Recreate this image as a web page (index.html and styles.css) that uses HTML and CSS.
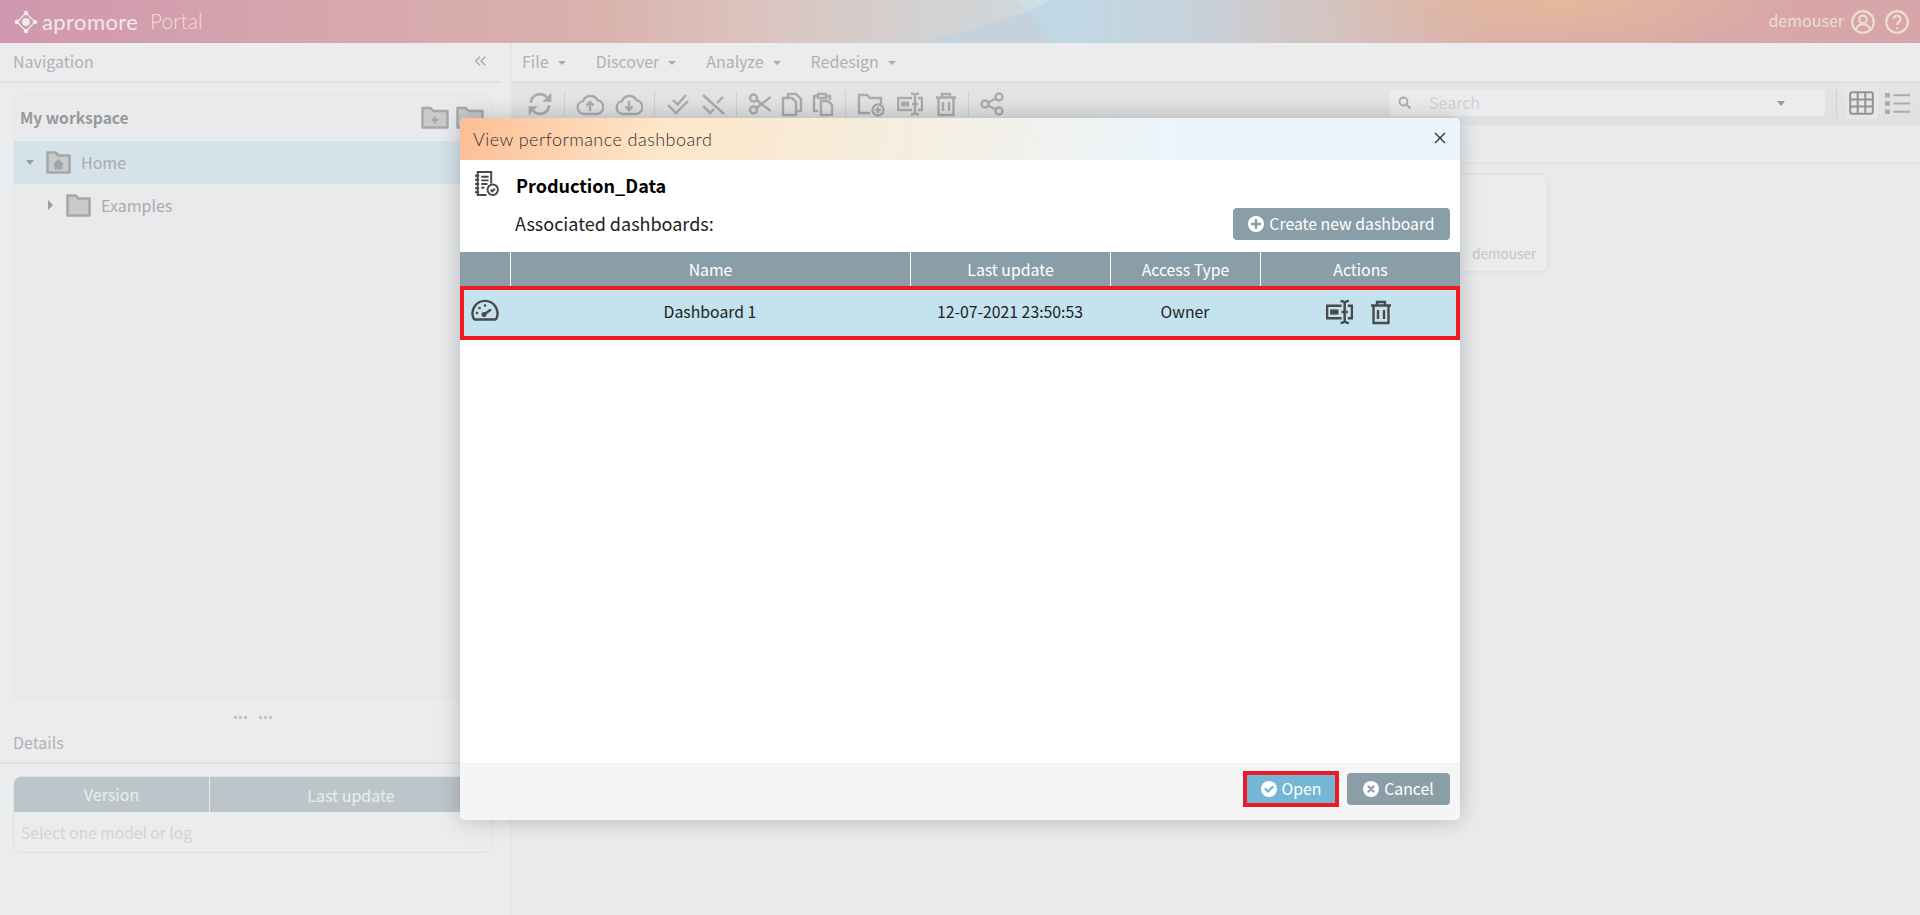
FILE: index.html
```html
<!DOCTYPE html>
<html lang="en">
<head>
<meta charset="utf-8">
<title>Apromore Portal</title>
<link rel="stylesheet" href="styles.css">
</head>
<body>
<svg class="defs" width="0" height="0" aria-hidden="true">
  <symbol id="i-sync" viewBox="0 0 24 24"><path d="M3.500 11a8.500 8.500 0 0 1 14.700-5.300L21 8.500"/><path class="solid" d="M22.500 1.500V10h-8.500z"/><path d="M20.500 13a8.500 8.500 0 0 1-14.700 5.300L3 15.500"/><path class="solid" d="M1.500 22.500V14H10z"/></symbol>
  <symbol id="i-up" viewBox="0 0 28 24"><path d="M8 22a6.500 6.500 0 0 1-1-12.900 8 8 0 0 1 14.500-1A7 7 0 0 1 20 22z"/><path d="M14 19v-9M10.500 13.500l3.500-3.500 3.500 3.500"/></symbol>
  <symbol id="i-down" viewBox="0 0 28 24"><path d="M8 22a6.500 6.500 0 0 1-1-12.900 8 8 0 0 1 14.500-1A7 7 0 0 1 20 22z"/><path d="M14 9v9M10.500 14.500l3.500 3.500 3.500-3.500"/></symbol>
  <symbol id="i-checks" viewBox="0 0 24 24"><path d="M7 8l4.500 4.500L20 3"/><path d="M2 13l8 8L22 9"/></symbol>
  <symbol id="i-unchecks" viewBox="0 0 24 24"><path d="M2 3l21 19"/><path d="M2 14l7 7 4-4"/><path d="M16 11l6-6"/></symbol>
  <symbol id="i-cut" viewBox="0 0 24 24"><circle cx="5.500" cy="6" r="3.500"/><circle cx="5.500" cy="18" r="3.500"/><path d="M8.500 8l14 11M8.500 16l14-11"/></symbol>
  <symbol id="i-copy" viewBox="0 0 22 24"><path d="M7 6V2h8l5 5v12h-5"/><path d="M2 6h9l4 4v13H2z"/></symbol>
  <symbol id="i-paste" viewBox="0 0 22 24"><path d="M6 19H2V4h4M14 4h4v4"/><path d="M6 6V2h8v4z"/><path d="M9 9h7l4 4v10H9z"/></symbol>
  <symbol id="i-folder-add" viewBox="0 0 28 24"><path d="M13 21H2V3h8l3 3h11v6"/><circle cx="21" cy="18" r="5.500"/><path d="M21 15v6M18 18h6"/></symbol>
  <symbol id="i-rename" viewBox="0 0 26 24"><path d="M15 6H1v12h14M21 6h4v12h-4"/><path d="M18 3v18M14 1.500c2 0 3 .5 4 1.500 1-1 2-1.500 4-1.500M14 22.500c2 0 3-.5 4-1.500 1 1 2 1.500 4 1.500"/><path class="solid" d="M4 9.500h8v5H4z"/><path d="M15 12h6"/></symbol>
  <symbol id="i-trash" viewBox="0 0 22 24"><path d="M1 5.500h20M7 5V2h8v3"/><path d="M3.500 6v17h15V6"/><path d="M8 10v9M14 10v9"/></symbol>
  <symbol id="i-share" viewBox="0 0 24 24"><circle cx="19" cy="5" r="3.500"/><circle cx="5" cy="12" r="3.500"/><circle cx="19" cy="19" r="3.500"/><path d="M8 10.500l8-4M8 13.500l8 4"/></symbol>
  <symbol id="i-folder" viewBox="0 0 25 23"><path class="tint" d="M1.500 21.500V1.500h8l3 3h11v17z"/></symbol>
  <symbol id="i-gauge" viewBox="0 0 28 22"><path d="M4 20.500a2 2 0 0 1-1.500-1.200A12.500 12.500 0 1 1 25.500 19.300 2 2 0 0 1 24 20.500z"/><path d="M13 15.500l7-5"/><circle class="solid" cx="13" cy="15.500" r="2.500"/><circle class="solid" cx="6" cy="14" r="1.300"/><circle class="solid" cx="8.500" cy="9" r="1.300"/><circle class="solid" cx="14" cy="6.500" r="1.300"/></symbol>
</svg>

<header class="topbar">
  <svg class="top-art" viewBox="0 0 1920 43" aria-hidden="true">
    <defs><linearGradient id="wash" gradientUnits="userSpaceOnUse" x1="1030" y1="0" x2="1260" y2="0"><stop offset="0" stop-color="#bfd8e6"/><stop offset="1" stop-color="#bfd8e6" stop-opacity="0"/></linearGradient></defs>
    <path d="M1016 0L1053 43H1300V0z" fill="url(#wash)"/>
    <path d="M1016 0h36Q1040 6 1026 11z" fill="#cddee4"/>
    <path d="M924 43Q985 25 1027 12L1053 43z" fill="#c5d1db"/>
  </svg>
  <div class="brand">
    <svg class="logo" viewBox="0 0 24 24" aria-hidden="true"><path d="M12 3l9 9-9 9-9-9z" fill="none" stroke="currentColor" stroke-width="1.200" stroke-linejoin="round"/><circle cx="12" cy="12" r="3.900" fill="currentColor"/><circle cx="12" cy="3" r="2.300" fill="currentColor"/><circle cx="12" cy="21" r="2.300" fill="currentColor"/><circle cx="3" cy="12" r="2.300" fill="currentColor"/><circle cx="21" cy="12" r="2.300" fill="currentColor"/></svg>
    <span class="brand-name">apromore</span>
    <span class="brand-app">Portal</span>
  </div>
  <div class="user">
    <span class="user-name">demouser</span>
    <svg class="user-icon" viewBox="0 0 24 24" aria-hidden="true"><circle cx="12" cy="12" r="10.800"/><circle cx="12" cy="9.500" r="3.800"/><path d="M5.500 19c.5-3 2.500-4.500 6.500-4.500s6 1.500 6.500 4.500"/></svg>
    <svg class="user-icon" viewBox="0 0 24 24" aria-hidden="true"><circle cx="12" cy="12" r="10.800"/><path d="M8.500 9a3.500 3.500 0 1 1 5.500 3c-1.300.9-2 1.500-2 3"/><path d="M12 17.500v1.500"/></svg>
  </div>
</header>

<div class="app">
  <aside class="sidebar">
    <div class="side-title nav-title">
      <span>Navigation</span>
      <svg class="collapse" viewBox="0 0 12 10" aria-hidden="true"><path d="M5.500 1L1.500 5l4 4M10.500 1l-4 4 4 4"/></svg>
    </div>
    <section class="workspace">
      <div class="workspace-head">
        <span>My workspace</span>
        <div class="workspace-tools">
          <svg class="ws-icon" viewBox="0 0 28 23" aria-hidden="true"><path class="ws-fill" d="M1.500 21.500V2h8l3 3h14v16.500z"/><path d="M14 10.500v7M10.500 14h7"/></svg>
          <svg class="ws-icon" viewBox="0 0 28 23" aria-hidden="true"><path class="ws-fill" d="M1.500 21.500V2h8l3 3h14v16.500z"/></svg>
        </div>
      </div>
      <div class="tree-row selected">
        <i class="caret down"></i>
        <svg class="folder" viewBox="0 0 25 23" aria-hidden="true"><use href="#i-folder"/><path class="home" d="M12.500 8l-6 5.500h2v5h8v-5h2z"/></svg>
        <span>Home</span>
      </div>
      <div class="tree-row child">
        <i class="caret right"></i>
        <svg class="folder" viewBox="0 0 25 23" aria-hidden="true"><use href="#i-folder"/></svg>
        <span>Examples</span>
      </div>
    </section>
    <div class="splitter"><i></i><i></i></div>
    <div class="side-title details-title"><span>Details</span></div>
    <section class="details">
      <div class="details-head"><span class="d-version">Version</span><span class="d-update">Last update</span></div>
      <div class="details-empty">Select one model or log</div>
    </section>
  </aside>

  <main class="content">
    <nav class="menu">
      <span class="menu-item">File<i class="caret down"></i></span>
      <span class="menu-item">Discover<i class="caret down"></i></span>
      <span class="menu-item">Analyze<i class="caret down"></i></span>
      <span class="menu-item">Redesign<i class="caret down"></i></span>
    </nav>
    <div class="toolbar">
      <svg class="tb w26" aria-hidden="true"><use href="#i-sync"/></svg>
      <i class="sep"></i>
      <div class="group g11">
        <svg class="tb w28" aria-hidden="true"><use href="#i-up"/></svg>
        <svg class="tb w28" aria-hidden="true"><use href="#i-down"/></svg>
      </div>
      <i class="sep"></i>
      <div class="group g11">
        <svg class="tb w24" aria-hidden="true"><use href="#i-checks"/></svg>
        <svg class="tb w24" aria-hidden="true"><use href="#i-unchecks"/></svg>
      </div>
      <i class="sep"></i>
      <div class="group g9">
        <svg class="tb w24" aria-hidden="true"><use href="#i-cut"/></svg>
        <svg class="tb w22" aria-hidden="true"><use href="#i-copy"/></svg>
        <svg class="tb w22" aria-hidden="true"><use href="#i-paste"/></svg>
      </div>
      <i class="sep"></i>
      <div class="group g12">
        <svg class="tb w28" aria-hidden="true"><use href="#i-folder-add"/></svg>
        <svg class="tb w26" aria-hidden="true"><use href="#i-rename"/></svg>
        <svg class="tb w22" aria-hidden="true"><use href="#i-trash"/></svg>
      </div>
      <i class="sep"></i>
      <svg class="tb w24" aria-hidden="true"><use href="#i-share"/></svg>
      <div class="search">
        <svg class="search-icon" viewBox="0 0 14 14" aria-hidden="true"><circle cx="5.500" cy="5.500" r="4"/><path d="M8.500 8.500l4 4"/></svg>
        <span>Search</span>
        <i class="caret down"></i>
      </div>
      <i class="sep view-sep"></i>
      <div class="view-toggle active">
        <svg class="view-icon" viewBox="0 0 25 24" aria-hidden="true"><rect x="1.200" y="1.200" width="22.600" height="21.600" rx="2"/><path d="M8.700 1v22M16.300 1v22M1 8.500h23M1 15.500h23"/></svg>
      </div>
      <div class="view-toggle">
        <svg class="view-icon" viewBox="0 0 25 21" aria-hidden="true"><path class="solid" d="M0 0h5v4.500H0zM0 8.200h5v4.500H0zM0 16.500h5V21H0z"/><path d="M8.500 2.200H25M8.500 10.500H25M8.500 18.700H25"/></svg>
      </div>
    </div>
    <div class="crumbs"></div>
    <div class="files">
      <div class="card"><span>demouser</span></div>
    </div>
  </main>
</div>

<div class="modal" role="dialog" aria-label="View performance dashboard">
  <div class="modal-title">
    <span>View performance dashboard</span>
    <svg class="close" viewBox="0 0 12 12" aria-hidden="true"><path d="M1 1l10 10M11 1L1 11"/></svg>
  </div>
  <div class="modal-body">
    <div class="log-row">
      <svg class="log-icon" viewBox="0 0 24 24" aria-hidden="true"><path d="M12 23H3.500V1h13v11"/><path d="M1 4.500h4M1 8.500h4M1 12.500h4M1 16.500h4M1 20.500h4"/><path d="M7 5.500h7M7 9h7M7 12.500h6M7 16h3"/><circle cx="18" cy="18" r="5"/><path d="M16 18l1.500 1.500 2.500-2.500"/></svg>
      <strong>Production_Data</strong>
    </div>
    <div class="assoc-row">
      <span class="assoc-label">Associated dashboards:</span>
      <button class="btn create"><svg class="btn-icon" viewBox="0 0 16 16" aria-hidden="true"><circle cx="8" cy="8" r="8"/><path d="M8 4v8M4 8h8"/></svg>Create new dashboard</button>
    </div>
    <div class="grid-head">
      <span></span><span>Name</span><span>Last update</span><span>Access Type</span><span>Actions</span>
    </div>
    <div class="grid-row">
      <span><svg class="row-gauge" aria-hidden="true"><use href="#i-gauge"/></svg></span>
      <span>Dashboard 1</span>
      <span>12-07-2021 23:50:53</span>
      <span>Owner</span>
      <span class="row-actions">
        <svg class="act w27" aria-hidden="true"><use href="#i-rename"/></svg>
        <svg class="act w22" aria-hidden="true"><use href="#i-trash"/></svg>
      </span>
    </div>
  </div>
  <div class="modal-foot">
    <button class="btn open"><svg class="btn-icon" viewBox="0 0 16 16" aria-hidden="true"><circle cx="8" cy="8" r="8"/><path d="M4.500 8l2.500 2.500 4.500-4.500"/></svg>Open</button>
    <button class="btn cancel"><svg class="btn-icon" viewBox="0 0 16 16" aria-hidden="true"><circle cx="8" cy="8" r="8"/><path d="M5.500 5.500l5 5M10.500 5.500l-5 5"/></svg>Cancel</button>
  </div>
</div>
</body>
</html>
```

FILE: styles.css
```css
* { box-sizing: border-box; }
html, body { height: 100%; }
body {
  margin: 0;
  height: 915px;
  overflow: hidden;
  display: flex;
  flex-direction: column;
  background: #ebecee;
  font-family: "Noto Sans CJK SC", "Source Sans Pro", "Open Sans", sans-serif;
  font-size: 16px;
  line-height: 20px;
  color: #b0b1b3;
}
.defs { position: absolute; }
symbol path, symbol circle, symbol rect { fill: none; stroke: currentColor; stroke-width: 2.400; }
symbol .solid { fill: currentColor; stroke: none; }
symbol .tint { fill: #c9cacc; stroke: #a5a7a9; stroke-width: 2.600; stroke-linejoin: round; }
i { display: block; }

.caret { width: 0; height: 0; border-style: solid; border-color: transparent; }
.caret.down { border-width: 5px 4px 0; border-top-color: #9b9c9e; }
.caret.right { border-width: 5px 0 5px 5px; border-left-color: #9b9c9e; }

/* top bar */
.topbar {
  position: relative;
  flex: 0 0 43px;
  display: flex;
  align-items: center;
  justify-content: space-between;
  padding: 0 11px 0 14px;
  color: #ecdfce;
  background:
    radial-gradient(ellipse 230px 55px at 1560px 0, #e3b99b, rgba(227,185,155,0)),
    linear-gradient(90deg, #d097ae 0, #d6a5ae 300px, #dab2ac 600px, #dcc3be 750px, #d4d0cf 900px, #d1d7da 1020px, #c9d4dc 1100px, #cbcdd2 1230px, #d5c3bf 1340px, #dbaeaa 1500px, #d9a8a8 1700px, #d7a4aa 1920px);
}
.top-art { position: absolute; left: 0; top: 0; width: 1920px; height: 43px; }
.brand, .user { position: relative; }
.brand { display: flex; align-items: center; }
.logo { width: 24px; height: 24px; color: #f1e9ea; }
.brand-name {
  margin-left: 4px;
  width: 108px;
  font-family: "Lato", sans-serif;
  font-size: 22px;
  color: #f3e9ea;
  letter-spacing: .4px;
}
.brand-app { font-family: "Lato", sans-serif; font-weight: 300; font-size: 21px; color: #eedfcf; padding-bottom: 1px; }
.user { display: flex; align-items: center; gap: 7px; font-size: 16px; }
.user-name { padding-bottom: 4px; }
.user-icon { width: 24px; height: 24px; fill: none; stroke: currentColor; stroke-width: 2.200; }
.user-icon + .user-icon { margin-left: 3px; }

/* layout */
.app { flex: 1; display: flex; min-height: 0; }
.sidebar {
  flex: 0 0 512px;
  display: flex;
  flex-direction: column;
  padding: 0 17px 0 13px;
  border-right: 2px solid #e4e5e7;
}
.side-title {
  margin: 0 -7px 0 -13px;
  padding-left: 13px;
  display: flex;
  align-items: center;
  justify-content: space-between;
  border-bottom: 2px solid #e0e1e3;
  font-size: 16px;
  color: #b0b1b3;
}
.nav-title { height: 40px; padding-right: 13px; padding-bottom: 2px; }
.collapse { width: 13px; height: 12px; fill: none; stroke: #a9abad; stroke-width: 1.300; }

.workspace {
  margin-top: 12px;
  height: 605px;
  flex: none;
  background: #e9eaec;
  border: 1px solid #e5e6e8;
  border-radius: 8px;
  color: #a9abad;
}
.workspace-head {
  height: 45px;
  padding: 0 0 3px 6px;
  display: flex;
  align-items: center;
  justify-content: space-between;
  font-size: 15.600px;
  font-weight: 700;
  color: #98999b;
}
.workspace-tools { display: flex; gap: 7px; padding-right: 8px; }
.ws-icon { width: 28px; height: 23px; fill: none; stroke: #a5a7a9; stroke-width: 2.400; }
.ws-fill { fill: #c9cacc; stroke-linejoin: round; }
.tree-row { height: 43px; display: flex; align-items: center; padding-left: 12px; font-size: 16px; }
.tree-row span { padding-bottom: 1px; }
.tree-row.selected { background: #d5e2e9; }
.tree-row .caret.down { margin-right: 12px; }
.tree-row.child { padding-left: 34px; height: 42px; }
.tree-row.child .caret { margin-right: 13px; }
.folder { width: 25px; height: 23px; margin-right: 10px; flex: none; }
.home { fill: #a1a3a5; }

.splitter { height: 32px; padding-top: 3px; display: flex; justify-content: center; align-items: center; gap: 12px; flex: none; }
.splitter i { width: 13px; height: 3px; background: radial-gradient(circle at 1.500px 1.500px, #c4c5c7 1.500px, transparent 1.600px) 0 0 / 5px 3px; }
.details-title { height: 32px; align-items: flex-start; flex: none; }
.details {
  margin-top: 12px;
  height: 77px;
  flex: none;
  border: 1px solid #e0e1e3;
  border-radius: 8px;
  overflow: hidden;
}
.details-head { height: 35px; display: flex; background: #bcc6ca; color: #e9eef0; text-align: center; align-items: center; font-size: 16px; }
.d-version { flex: 0 0 196px; line-height: 35px; border-right: 1px solid #e9edef; }
.d-update { flex: 1; }
.details-empty { padding: 10px 7px; font-size: 15.600px; color: #d2d3d5; }

.content { flex: 1; min-width: 0; display: flex; flex-direction: column; background: #e9eaec; }
.menu {
  height: 40px;
  flex: none;
  padding: 0 0 2px 10px;
  display: flex;
  align-items: center;
  gap: 30px;
  background: #ebecee;
  border-bottom: 2px solid #e0e1e3;
  font-size: 16px;
  color: #b0b1b3;
}
.menu-item { display: flex; align-items: center; gap: 9px; }
.menu-item .caret { border-width: 4px 4px 0; border-top-color: #a9abad; margin-top: 4px; }
.toolbar {
  height: 43px;
  flex: none;
  padding: 1px 3px 0 15px;
  display: flex;
  align-items: center;
  gap: 11px;
  background: linear-gradient(#e4e5e7, #dfe0e2);
  color: #a9abad;
  border-bottom: 2px solid #e3e4e6;
}
.tb { height: 26px; flex: none; }
.w22 { width: 22px; } .w24 { width: 24px; } .w26 { width: 26px; } .w27 { width: 27px; } .w28 { width: 28px; }
.group { display: flex; }
.g9 { gap: 9px; } .g11 { gap: 11px; } .g12 { gap: 12px; }
.sep { width: 1px; height: 26px; background: #cfd0d3; }
.search {
  margin: -2px 0 0 auto;
  width: 435px;
  height: 26px;
  display: flex;
  align-items: center;
  padding: 0 40px 0 8px;
  background: #ebecee;
  border-radius: 3px;
  color: #d0d1d3;
  font-size: 16px;
}
.search span { flex: 1; margin-left: 17px; padding-bottom: 2px; }
.search-icon { width: 14px; height: 14px; fill: none; stroke: #a9abad; stroke-width: 1.800; }
.view-sep { height: 28px; }
.view-toggle { width: 33px; height: 32px; display: flex; align-items: center; justify-content: center; margin-left: -4px; border-radius: 3px; margin-right: 3px; margin-top: -2px; color: #98999b; }
.view-toggle.active { background: #e6e7e9; margin-right: -4px; margin-left: -3px; }
.view-icon { width: 25px; height: 24px; fill: none; stroke: #919294; stroke-width: 2; }
.view-icon .solid { fill: #a9abad; stroke: none; }
.view-toggle:not(.active) .view-icon { stroke: #a9abad; height: 21px; }
.crumbs { height: 38px; flex: none; border-bottom: 2px solid #e4e5e7; background: #e9eaec; }
.files { flex: 1; padding: 9px 371px 0 0; display: flex; justify-content: flex-end; }
.card {
  width: 180px;
  height: 100px;
  background: #ebecee;
  border: 2px solid #e3e4e6;
  border-radius: 7px;
  display: flex;
  align-items: flex-end;
  justify-content: flex-end;
  padding: 0 11px 8px;
  font-size: 13.500px;
  color: #c4c5c7;
}

/* modal */
.modal {
  position: absolute;
  left: 460px;
  top: 118px;
  width: 1000px;
  height: 702px;
  display: flex;
  flex-direction: column;
  background: #fff;
  border-radius: 5px;
  overflow: hidden;
  box-shadow: 0 0 22px rgba(0,0,0,.22);
  color: #111;
}
.modal-title {
  flex: 0 0 42px;
  display: flex;
  align-items: center;
  justify-content: space-between;
  padding: 0 14px 0 13px;
  background: linear-gradient(100deg, #fdbe95 0, #fde6c8 20%, #f5eee0 45%, #ecf5fb 70%, #ebf4fb 100%);
  font-family: "Lato", sans-serif;
  font-weight: 300;
  font-size: 18px;
  letter-spacing: .45px;
  color: #333;
}
.close { width: 12px; height: 12px; margin-top: -3px; fill: none; stroke: #333; stroke-width: 1.400; }
.modal-body { flex: 1; min-height: 0; display: flex; flex-direction: column; font-size: 15.800px; }
.log-row { height: 42px; padding: 8px 0 0 14px; display: flex; align-items: center; }
.log-icon { width: 25px; height: 25px; fill: none; stroke: #4a4a4a; stroke-width: 1.900; flex: none; margin-top: -4px; }
.log-row strong { margin-left: 17px; font-size: 18px; color: #000; }
.assoc-row { height: 50px; padding: 6px 10px 12px 55px; display: flex; align-items: center; justify-content: space-between; font-size: 18px; color: #222; }
.assoc-label { padding-bottom: 2px; }
.btn {
  display: flex;
  align-items: center;
  justify-content: center;
  gap: 5px;
  padding: 0 0 1px;
  border: 0;
  border-radius: 4px;
  font: inherit;
  font-size: 15.800px;
  color: #fff;
}
.btn-icon { width: 16px; height: 16px; flex: none; }
.btn-icon circle { fill: #fff; }
.btn-icon path { fill: none; stroke-width: 2.400; stroke-linecap: round; stroke-linejoin: round; }
.create { width: 217px; height: 32px; background: #8a9ea7; }
.create .btn-icon path, .cancel .btn-icon path { stroke: #8a9ea7; }
.grid-head, .grid-row { display: grid; grid-template-columns: 50px 400px 200px 150px 200px; text-align: center; align-items: center; }
.grid-head { height: 34px; background: #8a9ea7; color: #fff; }
.grid-head span { height: 100%; line-height: 36px; }
.grid-head span + span { border-left: 1px solid #fff; }
.grid-row { height: 54px; background: #c5e3ef; box-shadow: inset 0 0 0 4px #ed1c24; color: #222; padding-bottom: 3px; }
.row-gauge { width: 28px; height: 22px; display: block; margin: -3px 0 0 11px; color: #4a4a4a; }
.row-actions { display: flex; justify-content: center; align-items: center; gap: 17px; color: #4a4a4a; padding-right: 3px; }
.act { height: 26px; flex: none; }
.modal-foot {
  flex: 0 0 57px;
  display: flex;
  justify-content: flex-end;
  align-items: center;
  gap: 12px;
  padding: 0 10px 6px 0;
  background: #f5f5f5;
  border-top: 1px solid #eee;
}
.open { width: 88px; height: 28px; background: #74b6d3; outline: 4px solid #ed1c24; border-radius: 0; }
.open .btn-icon path { stroke: #74b6d3; }
.cancel { width: 103px; height: 32px; background: #8a9ea7; }
```
